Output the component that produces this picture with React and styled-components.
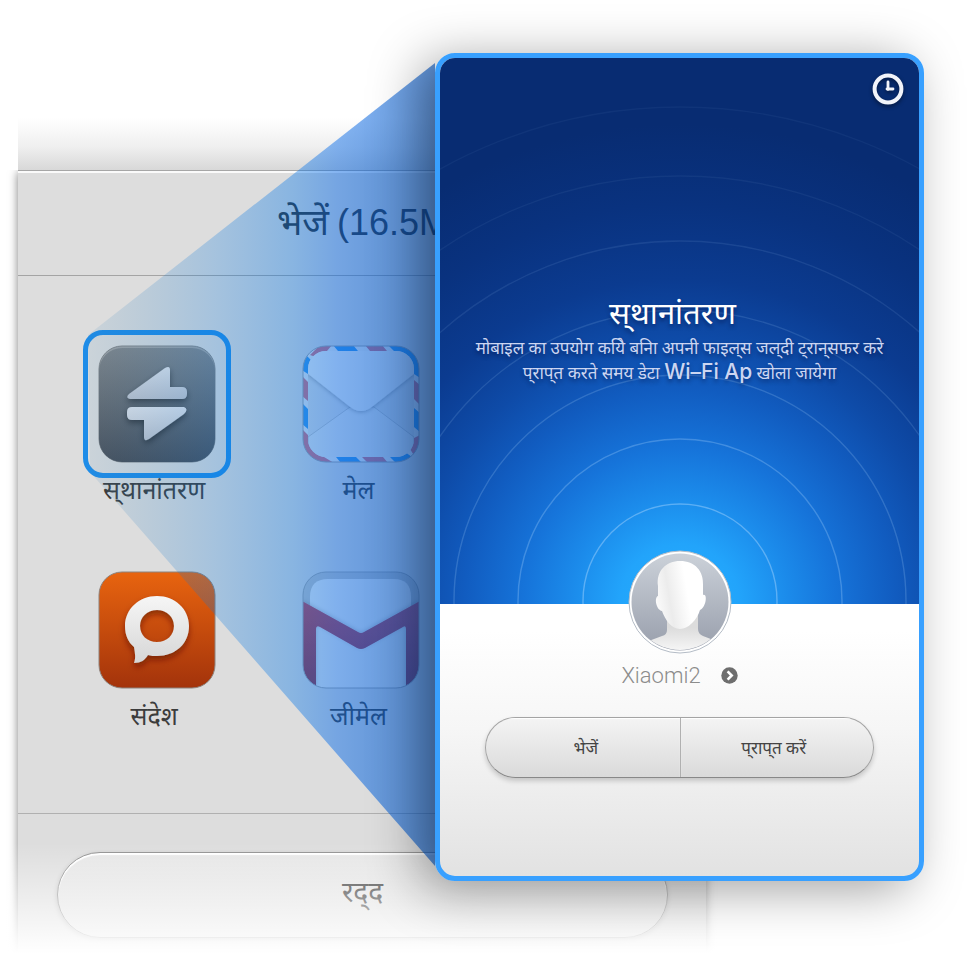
import React from "react";
import styled, { createGlobalStyle, css } from "styled-components";

const Global = createGlobalStyle`
  * { box-sizing: border-box; }
  body { margin: 0; background: #fff; font-family: "Noto Sans", "Liberation Sans", sans-serif; }
  button { font-family: inherit; cursor: pointer; }
`;

const Scene = styled.main`
  display: grid;
  grid-template-columns: 18px 417fr 271fr 218fr 48px;
  grid-template-rows: auto;
  align-items: start;
  min-height: 100vh;
  overflow: hidden;
`;

const Sheet = styled.section`
  grid-column: 2 / 4;
  grid-row: 1;
  margin-top: 118px;
`;

const SheetTop = styled.div`
  height: 52px;
  background: linear-gradient(to bottom, rgba(216, 216, 216, 0), rgba(216, 216, 216, 0.4) 55%, #d8d8d8);
`;

const SheetBody = styled.div`
  position: relative;
  background: #ddd;
  border-top: 1px solid #a6a6a6;
  box-shadow: 0 2px 9px rgba(0, 0, 0, 0.5);
  clip-path: inset(0 -12px 0 -12px);

  &::after {
    content: "";
    position: absolute;
    left: -12px;
    right: -12px;
    bottom: 0;
    height: 115px;
    pointer-events: none;
    background: linear-gradient(to bottom, rgba(255, 255, 255, 0), rgba(255, 255, 255, 0.5) 50%, #fff 96%);
  }
`;

const SheetHeader = styled.header`
  height: 105px;
  padding: 27px 0 0 259px;
  border-top: 2px solid #fafafa;
  border-bottom: 1px solid #a4a4a4;
  overflow: hidden;
`;

const SheetTitle = styled.h1`
  display: flex;
  align-items: baseline;
  gap: 8px;
  margin: 0;
  font-weight: 400;
  font-size: 36px;
  line-height: 44px;
  color: #303030;
  white-space: nowrap;
`;

const Size = styled.span`
  font-family: "Liberation Sans", sans-serif;
`;

const Tiles = styled.ul`
  display: grid;
  grid-template-columns: repeat(3, 1fr);
  row-gap: 61px;
  height: 538px;
  align-content: start;
  list-style: none;
  margin: 0;
  padding: 69px 38px 0 37px;
  border-bottom: 1px solid #b0b0b0;
`;

const Tile = styled.a`
  display: flex;
  flex-direction: column;
  align-items: center;
  gap: 5px;
  color: #3c3c3c;
  text-decoration: none;
`;

const IconFrame = styled.span`
  position: relative;
  display: block;
  width: 118px;
  height: 118px;
  svg { display: block; width: 118px; height: 118px; }
  ${(p) => p.$selected && css`
    &::after {
      content: "";
      position: absolute;
      inset: -15px;
      z-index: 2;
      border: 5px solid #1e8ce8;
      border-radius: 20px;
    }
  `}
`;

const TileLabel = styled.span`
  padding-right: 6px;
  font-size: 25px;
  line-height: 42px;
`;

const SheetFooter = styled.footer`
  height: 144px;
  padding: 38px 38px 0 39px;
`;

const Cancel = styled.button`
  display: block;
  width: 100%;
  height: 86px;
  padding: 0 0 8px;
  border: 1px solid #8f8f8f;
  border-radius: 43px;
  background: linear-gradient(to bottom, #e6e6e6, #dedede);
  box-shadow: inset 0 2px 1px #fff, 0 2px 5px rgba(0, 0, 0, 0.2);
  color: #303030;
  font-size: 28px;
`;

const BeamArt = styled.svg`
  grid-column: 2;
  grid-row: 1;
  z-index: 1;
  width: 100%;
  height: 803px;
  margin-top: 63px;
  pointer-events: none;
`;

const Phone = styled.section`
  grid-column: 3 / 5;
  grid-row: 1;
  z-index: 3;
  margin-top: 53px;
  border: 5px solid #38a0ff;
  border-radius: 20px;
  overflow: hidden;
  background: linear-gradient(to bottom, #fff 70%, #f6f6f6 82%, #e2e2e2);
  box-shadow: -14px 8px 52px rgba(0, 0, 0, 0.38);
`;

const Hero = styled.div`
  display: grid;
  height: 546px;
  background: radial-gradient(circle at 50% 100%, #26b0ff 0, #22a4fb 60px, #1b8aea 110px, #1674da 155px, #115cc0 215px, #0e4ba8 265px, #0b3b90 325px, #09327f 400px, #082c72 480px);
`;

const Rings = styled.svg`
  grid-area: 1 / 1;
  width: 100%;
  height: 546px;
`;

const HeroContent = styled.div`
  grid-area: 1 / 1;
  z-index: 1;
  display: flex;
  flex-direction: column;
  align-items: center;
  color: #fff;
  text-shadow: 0 3px 4px rgba(0, 0, 40, 0.4);
`;

const History = styled.button`
  align-self: flex-end;
  width: 34px;
  height: 34px;
  margin: 14px 14px 0 0;
  padding: 0;
  border: 0;
  background: none;
  svg { display: block; filter: drop-shadow(0 2px 2px rgba(0, 0, 0, 0.45)); }
`;

const HeroTitle = styled.h2`
  margin: 183px 14px 0 0;
  font-weight: 400;
  font-size: 31px;
  line-height: 46px;
`;

const HeroText = styled.p`
  margin: 0;
  font-size: 17px;
  line-height: 25px;
  text-align: center;
  color: #ccd6f2;
  white-space: nowrap;
`;

const Network = styled.span`
  font-family: Inter, sans-serif;
  font-weight: 500;
  font-size: 21px;
  line-height: 20px;
`;

const Profile = styled.div`
  display: flex;
  flex-direction: column;
  align-items: center;
  height: 272px;
`;

const Avatar = styled.svg`
  z-index: 1;
  width: 104px;
  height: 104px;
  margin-top: -54px;
`;

const Device = styled.button`
  display: flex;
  align-items: center;
  gap: 20px;
  height: 32px;
  margin: 5px 0 26px;
  padding: 0;
  border: 0;
  background: none;
  color: #8c8c8c;
  font-family: Roboto, sans-serif;
  font-weight: 300;
  font-size: 22px;
`;

const Actions = styled.div`
  display: grid;
  grid-template-columns: 1fr 1fr;
  width: calc(100% - 90px);
  height: 61px;
  border: 1px solid #a4a4a4;
  border-bottom-color: #888;
  border-radius: 31px;
  overflow: hidden;
  background: linear-gradient(to bottom, #f4f4f4, #dadada);
  box-shadow: 0 3px 5px rgba(0, 0, 0, 0.18);
`;

const Action = styled.button`
  padding: 0 0 0 6px;
  border: 0;
  background: none;
  box-shadow: inset 0 1px 1px #fff;
  color: #444;
  font-size: 17px;
  & + & { border-left: 1px solid #b0b0b0; padding: 0 6px 0 0; }
`;

const TransferIcon = () => (
  <svg viewBox="0 0 118 118" aria-hidden="true">
    <defs>
      <linearGradient id="tBase" x1="0" y1="0" x2="0" y2="1">
        <stop offset="0" stopColor="#848688" />
        <stop offset="1" stopColor="#4a4e56" />
      </linearGradient>
      <linearGradient id="tArrow" x1="0" y1="0" x2="0" y2="1">
        <stop offset="0" stopColor="#e6e6ea" />
        <stop offset="1" stopColor="#c2c4cc" />
      </linearGradient>
      <filter id="tShadow" x="-20%" y="-20%" width="140%" height="150%">
        <feDropShadow dx="0" dy="3" stdDeviation="3" floodOpacity="0.45" />
      </filter>
    </defs>
    <rect x="1" y="1" width="116" height="116" rx="23" fill="#a2a2a2" stroke="#858585" />
    <rect x="1" y="3" width="116" height="114" rx="23" fill="url(#tBase)" />
    <g fill="url(#tArrow)" filter="url(#tShadow)">
      <path d="M31 49 L67 23 Q72 20 72 25 V42 H84 Q89 42 89 47 V49 Q89 54 84 54 H32 Q27 53 31 49 Z" />
      <path d="M86 69 L51 94 Q46 97 46 92 V75 H34 Q29 75 29 70 V67 Q29 62 34 62 H86 Q91 64 86 69 Z" />
    </g>
  </svg>
);

const MailIcon = () => (
  <svg viewBox="0 0 118 118" aria-hidden="true">
    <defs>
      <clipPath id="mClip"><rect x="1" y="1" width="116" height="116" rx="23" /></clipPath>
      <clipPath id="mBody"><rect x="6" y="6" width="106" height="106" rx="18" /></clipPath>
      <filter id="mShadow" x="-10%" y="-10%" width="120%" height="130%">
        <feDropShadow dx="0" dy="1" stdDeviation="2" floodOpacity="0.3" />
      </filter>
    </defs>
    <g clipPath="url(#mClip)">
      <rect width="118" height="118" fill="#eee" />
      <g fill="#d8707c">
        <path d="M8 10 L18 0 H30 L25 6 L14 12 Z M63 0 H80 L85 6 H68 Z M0 31 L6 37 V56 L0 51 Z M0 84 L6 90 L10 104 L22 112 L32 118 H0 Z M60 112 H81 L86 118 H66 Z M112 35 L118 40 V60 L112 54 Z M118 90 L112 93 L108 104 L113 112 L118 106 Z" />
      </g>
      <g fill="#3c98e8">
        <path d="M0 25 L6 29 L9 15 L4 10 L0 16 Z M31 0 H51 L56 6 H36 Z M86 0 H118 V33 L112 29 L104 12 L92 6 Z M0 58 L6 64 V84 L0 79 Z M34 112 H54 L60 118 H39 Z M112 63 L118 68 V87 L112 82 Z M88 112 L103 107 L110 112 L98 118 L94 118 Z" />
      </g>
      <g clipPath="url(#mBody)">
        <rect x="6" y="6" width="106" height="106" fill="#e2e2e2" />
        <path d="M6 92 L48 62 H72 L112 92 V113 H6 Z" fill="#ebebeb" stroke="#c4c4c4" />
        <path d="M0 24 L47 61 Q59 71 71 61 L118 24 V0 H0 Z" fill="#f4f4f4" filter="url(#mShadow)" />
      </g>
    </g>
    <rect x="1" y="1" width="116" height="116" rx="23" fill="none" stroke="#a0a0a0" />
  </svg>
);

const MessagesIcon = () => (
  <svg viewBox="0 0 118 118" aria-hidden="true">
    <defs>
      <linearGradient id="sBase" x1="0" y1="0" x2="0" y2="1">
        <stop offset="0" stopColor="#e8640f" />
        <stop offset="1" stopColor="#a3330b" />
      </linearGradient>
      <linearGradient id="sBubble" x1="0" y1="0" x2="0" y2="1">
        <stop offset="0" stopColor="#f6f6f6" />
        <stop offset="1" stopColor="#d6d6d6" />
      </linearGradient>
      <filter id="sShadow" x="-20%" y="-20%" width="140%" height="150%">
        <feDropShadow dx="0" dy="4" stdDeviation="3" floodColor="#5a1500" floodOpacity="0.6" />
      </filter>
    </defs>
    <rect x="1" y="1" width="116" height="116" rx="23" fill="url(#sBase)" stroke="#8d827c" />
    <path fillRule="evenodd" fill="url(#sBubble)" filter="url(#sShadow)" d="M59 25 C77 25 91 38 91 55 C91 73 77 85 59 85 C56 85 53 85 50 84 C47 89 43 92 36 92 C38 87 37 82 36 76 C30 71 27 64 27 55 C27 38 41 25 59 25 Z M59 39 C49 39 42 46 42 55 C42 64 49 71 59 71 C69 71 76 64 76 55 C76 46 69 39 59 39 Z" />
  </svg>
);

const GmailIcon = () => (
  <svg viewBox="0 0 118 118" aria-hidden="true">
    <defs>
      <clipPath id="gClip"><rect x="1" y="1" width="116" height="116" rx="23" /></clipPath>
      <linearGradient id="gRed" x1="0" y1="0" x2="0" y2="1">
        <stop offset="0" stopColor="#c44450" />
        <stop offset="1" stopColor="#962e3a" />
      </linearGradient>
      <filter id="gShadow" x="-10%" y="-20%" width="120%" height="140%">
        <feDropShadow dx="0" dy="-1" stdDeviation="2" floodOpacity="0.2" />
      </filter>
    </defs>
    <g clipPath="url(#gClip)">
      <rect width="118" height="118" fill="#c6c6c6" />
      <path d="M8 118 V26 Q8 8 26 8 H92 Q109 8 109 26 V118 Z" fill="#f2f2f2" />
      <path d="M14 118 V54 L59 80 L104 54 V118 Z" fill="#ededed" />
      <path d="M0 30 L56 61 Q59 63 62 61 L118 30 V118 H104 V58 Q104 54 101 56 L63 77 Q59 79 55 77 L18 56 Q14 54 14 58 V118 H0 Z" fill="url(#gRed)" filter="url(#gShadow)" />
    </g>
    <rect x="1" y="1" width="116" height="116" rx="23" fill="none" stroke="#a4a4a4" />
  </svg>
);

const Beam = () => (
  <BeamArt viewBox="18 63 417 803" preserveAspectRatio="none" aria-hidden="true">
    <defs>
      <linearGradient id="beam" gradientUnits="userSpaceOnUse" x1="85" y1="0" x2="435" y2="0">
        <stop offset="0" stopColor="#3080b8" stopOpacity="0.1" />
        <stop offset="0.1" stopColor="#2078bc" stopOpacity="0.14" />
        <stop offset="0.37" stopColor="#0878e0" stopOpacity="0.26" />
        <stop offset="0.59" stopColor="#0074e8" stopOpacity="0.38" />
        <stop offset="0.72" stopColor="#0066e8" stopOpacity="0.47" />
        <stop offset="1" stopColor="#0054c4" stopOpacity="0.62" />
      </linearGradient>
    </defs>
    <path d="M88 335 L435 63 V866 L90 472 Z" fill="url(#beam)" />
  </BeamArt>
);

const RingArt = () => (
  <Rings viewBox="0 0 479 546" preserveAspectRatio="xMidYMax slice" aria-hidden="true">
    {[[97, 0.42], [162, 0.28], [226, 0.2], [291, 0.14], [360, 0.1], [425, 0.06], [494, 0.05]].map(([r, o]) => (
      <circle key={r} cx="240" cy="543" r={r} fill="none" stroke="#b4dcff" strokeOpacity={o} strokeWidth="1.4" />
    ))}
  </Rings>
);

const apps = [
  { label: "स्\u200cथानांतरण", Icon: TransferIcon, selected: true },
  { label: "मेल", Icon: MailIcon },
  null,
  { label: "संदेश", Icon: MessagesIcon },
  { label: "जीमेल", Icon: GmailIcon },
];

export default function App() {
  return (
    <>
      <Global />
      <Scene>
        <Sheet>
          <SheetTop />
          <SheetBody>
            <SheetHeader>
              <SheetTitle>भेजें <Size>(16.5M</Size></SheetTitle>
            </SheetHeader>
            <Tiles>
              {apps.map((app, i) => (
                <li key={i}>
                  {app && (
                    <Tile href="#">
                      <IconFrame $selected={app.selected}><app.Icon /></IconFrame>
                      <TileLabel>{app.label}</TileLabel>
                    </Tile>
                  )}
                </li>
              ))}
            </Tiles>
            <SheetFooter>
              <Cancel type="button">{"रद्\u200cद"}</Cancel>
            </SheetFooter>
          </SheetBody>
        </Sheet>
        <Beam />
        <Phone>
          <Hero>
            <RingArt />
            <HeroContent>
              <History type="button" aria-label="इतिहास">
                <svg width="34" height="34" viewBox="0 0 34 34" fill="none" stroke="#f2f4fa">
                  <circle cx="17" cy="17" r="13.4" strokeWidth="4" />
                  <path d="M17 10 V17.5 M16 17 H22" strokeWidth="2.8" strokeLinecap="round" />
                </svg>
              </History>
              <HeroTitle>{"स्\u200cथानांतरण"}</HeroTitle>
              <HeroText>
                {"मोबाइल का उपयोग कयिे बनिा अपनी फाइल्\u200cस जल्\u200cदी ट्\u200cरान्\u200cसफर करे"}
                <br />
                {"प्\u200cराप्\u200cत करते समय डेटा "}<Network>Wi–Fi Ap</Network>{" खोला जायेगा"}
              </HeroText>
            </HeroContent>
          </Hero>
          <Profile>
            <Avatar viewBox="0 0 104 104" aria-hidden="true">
              <defs>
                <linearGradient id="avBg" x1="0" y1="0" x2="0" y2="1">
                  <stop offset="0" stopColor="#cbd1d9" />
                  <stop offset="1" stopColor="#989eab" />
                </linearGradient>
                <linearGradient id="avFace" x1="0" y1="0.6" x2="0.9" y2="0.4">
                  <stop offset="0" stopColor="#fbfbfb" />
                  <stop offset="0.3" stopColor="#ececec" />
                  <stop offset="0.7" stopColor="#fff" />
                </linearGradient>
                <linearGradient id="avNeck" x1="0" y1="0.4" x2="0" y2="1">
                  <stop offset="0" stopColor="#dcdcdc" />
                  <stop offset="1" stopColor="#fafafa" />
                </linearGradient>
                <clipPath id="avClip"><circle cx="52" cy="52" r="48" /></clipPath>
              </defs>
              <circle cx="52" cy="52" r="51" fill="#fff" stroke="#b4bcc6" />
              <circle cx="52" cy="52" r="48.5" fill="url(#avBg)" />
              <g clipPath="url(#avClip)">
                <path d="M39 66 V80 Q39 85 34 86 L18 92 V104 H88 V91 L75 86 Q70 84 70 79 V60 Z" fill="url(#avNeck)" />
                <path d="M52 11 C67 11 76 21 75 36 L75 45 C80 43 78 58 72 60 C69 70 60 79 52 79 C44 79 37 70 34 61 C28 60 26 47 30 46 L30 36 C28 21 38 11 52 11 Z" fill="url(#avFace)" />
              </g>
            </Avatar>
            <Device type="button">
              Xiaomi2
              <svg width="17" height="17" viewBox="0 0 17 17" aria-hidden="true">
                <circle cx="8.5" cy="8.5" r="8.2" fill="#6e6e6e" />
                <path d="M6.6 4.4 L10.7 8.5 L6.6 12.6" fill="none" stroke="#fff" strokeWidth="2.6" />
              </svg>
            </Device>
            <Actions>
              <Action type="button">भेजें</Action>
              <Action type="button">{"प्\u200cराप्\u200cत करें"}</Action>
            </Actions>
          </Profile>
        </Phone>
      </Scene>
    </>
  );
}
